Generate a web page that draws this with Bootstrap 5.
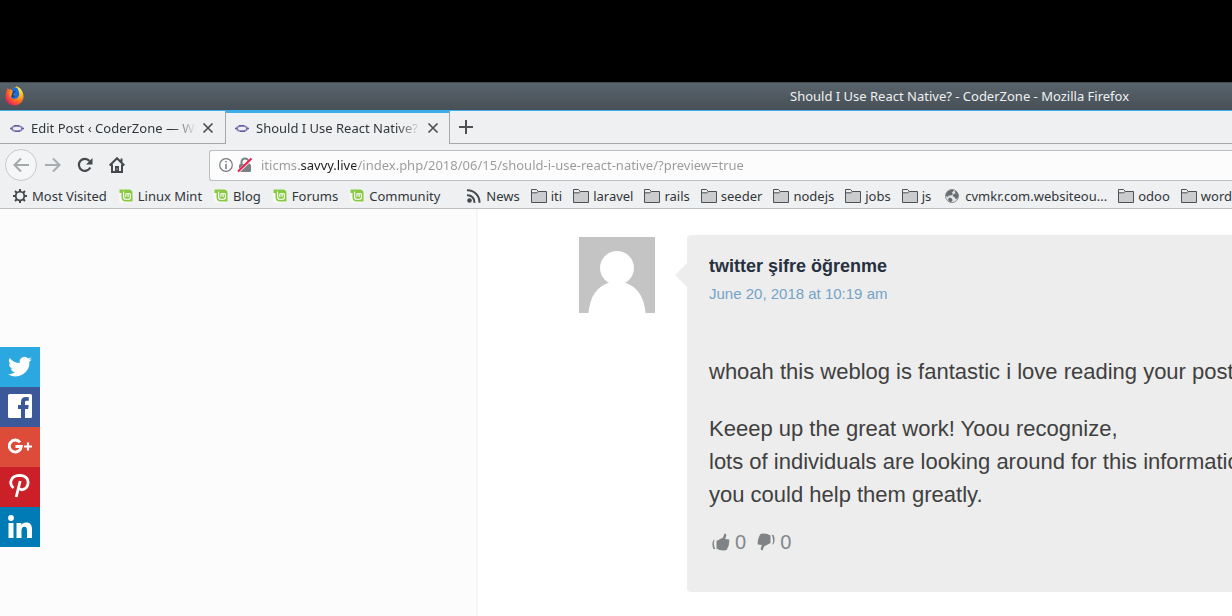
<!DOCTYPE html>
<html lang="en">
<head>
<meta charset="utf-8">
<meta name="viewport" content="width=device-width, initial-scale=1">
<title>Should I Use React Native? - CoderZone</title>
<link href="https://cdn.jsdelivr.net/npm/bootstrap@5.3.0/dist/css/bootstrap.min.css" rel="stylesheet">
<style>
body{font-family:"Noto Sans",sans-serif;font-size:13px;line-height:20px;color:#31363b;background:#fff;overflow:hidden}
a{color:inherit;text-decoration:none}
svg{display:block;flex:none}
.screen-gap{height:82px;background:#000}
.titlebar{height:28px;background:linear-gradient(#59636b,#475057);border-top:1px solid #434a50;color:#eff0f1;padding-left:5px;padding-bottom:2px}
.titlebar .caption{margin-left:766px;white-space:nowrap}
.chrome{background:#eff0f1}
.tabstrip{height:34px;border-top:1px solid #3daee9}
.tab-item{height:33px;border-bottom:1px solid #a4a8ab;border-right:1px solid #a4a8ab;padding-left:9px;padding-right:11px;padding-top:2px;gap:6px}
.tab-first{width:226px}
.tab-current{width:224px;border-top:2px solid #3daee9;border-bottom:0;padding:0 10px 1px 8px}
.tab-name{white-space:nowrap;overflow:hidden;-webkit-mask-image:linear-gradient(90deg,#000 calc(100% - 24px),transparent);mask-image:linear-gradient(90deg,#000 calc(100% - 24px),transparent)}
.tab-rest{border-bottom:1px solid #a4a8ab;padding-left:9px}
.plain{background:none;border:0;padding:0;color:#4d5155}
.toolbar{height:42px;padding:0 0 0 5px}
.back{width:32px;height:32px;border:1px solid #c6c8ca;border-radius:50%;background:#f5f6f7}
.urlbox{height:31px;border:1px solid #bcbfc1;border-right:0;border-radius:3px 0 0 3px;background:#fcfcfc;padding-left:9px;margin-left:84px}
.urlbox input{border:0;padding:0;outline:0;min-width:0;line-height:20px;color:transparent;background:linear-gradient(90deg,#999 38px,#1c1e20 38px,#1c1e20 95px,#999 95px);-webkit-background-clip:text;background-clip:text}
.bookmarks{height:23px;padding-left:12px;padding-bottom:2px;gap:11px;border-bottom:1px solid #bcbebf;overflow:hidden;white-space:nowrap}
.bookmarks a{gap:4px;flex:none}
.bookmarks .after-split{margin-left:15px}
.bookmarks .site{margin-left:2px;gap:5px}
.page-side{width:478px;min-height:407px;flex:none;background:#fcfcfc;border-right:2px solid #f5f5f5;padding-top:138px}
.share a{width:40px;height:40px;display:flex;align-items:center;justify-content:center}
.tw{background:#2ca8e0}.fb{background:#3b5998}.gp{background:#dd4b39}.pi{background:#cb2027}.li{background:#007bb6}
.thread{font-family:"Liberation Sans",sans-serif;padding:26px 0 24px 101px;min-width:0}
.avatar{margin-top:2px}
.bubble{position:relative;background:#ededed;border-radius:4px 0 0 4px;margin-left:32px;padding:20px 0 38px 22px;white-space:nowrap;min-width:0}
.bubble::before{content:"";position:absolute;left:-12px;top:28px;border:12px solid transparent;border-left:0;border-right-color:#ededed}
.bubble h2{font-size:18px;line-height:22px;font-weight:700;color:#26303f;margin:0}
.stamp{font-size:15px;line-height:20px;color:#74a3c7;display:block;margin-top:7px}
.words{font-size:22px;line-height:33px;color:#404040;padding-top:51px}
.words p{margin:0 0 24px}
.votes{font-size:20px;line-height:24px;color:#83878a;padding-left:3px;margin-top:-5px;gap:11px}
.votes button{font-size:20px;line-height:24px;color:#83878a;gap:5px}
</style>
<script src="https://cdn.jsdelivr.net/npm/bootstrap@5.3.0/dist/js/bootstrap.bundle.min.js"></script>
</head>
<body>
<svg width="0" height="0" class="position-absolute" aria-hidden="true">
<defs>
<symbol id="folder" viewBox="0 0 16 16"><path d="M.5 14.500v-13h5l2 2h8v11z" fill="#cbcccd" stroke="#4d5155"/><path d="M1 2h4.300l1.500 1.500-1.500 1H1z" fill="#eff0f1"/><path d="M1 4.800h4.500l2-1.300" fill="none" stroke="#4d5155"/></symbol>
<symbol id="mint" viewBox="0 0 16 16"><rect x="1" y="1" width="14" height="14" rx="2" fill="#f7f7f5"/><path d="M1.500 1.500H11q3.500 0 3.500 3.500v8.500H8q-4.500 0-4.500-4.500V5h-2z" fill="#87c940"/><path d="M5.600 3.500V9q0 2.300 2.400 2.300h2.400q2 0 2-2V6.500q0-1-1.100-1t-1.200 1V9M10.100 6.500q0-1-1.100-1t-1.200 1V9" fill="none" stroke="#fff" stroke-width="1.100"/></symbol>
<symbol id="coder" viewBox="0 0 16 16"><ellipse cx="8" cy="8.500" rx="5" ry="2.700" fill="none" stroke="#8c86bd" stroke-width="1.800"/><path d="M1 8.500h2.500M12.500 8.500H15M5 5.700h5M6 11.300h5" stroke="#625ca5" stroke-width="1.300"/></symbol>
<symbol id="cross" viewBox="0 0 12 12"><path d="M1.500 1.500l9 9M10.500 1.500l-9 9" stroke="#4d5155" stroke-width="1.700"/></symbol>
<radialGradient id="flame" cx=".8" cy=".15" r="1"><stop offset="0" stop-color="#fff04f"/><stop offset=".4" stop-color="#ffac20"/><stop offset=".7" stop-color="#ff5a28"/><stop offset="1" stop-color="#e21667"/></radialGradient>
</defs>
</svg>

<div class="screen-gap"></div>
<header class="chrome">
  <div class="titlebar d-flex align-items-center">
    <svg width="19" height="20" viewBox="0 0 19 20"><path d="M1.500 5l1.300-3 1.700 2L6 2.500l.5 2 5-4.300C16 2 18.500 6 18.500 10.500c0 5-4 9-9 9s-9-4-9-8.500c0-2.500.3-4 1-6z" fill="url(#flame)"/><path d="M7 4c2-3 4.500-3 5.500-1.500C14.500 6 15 9 13 11.500c-2 2-5.500 1.800-7-.5l3-.5 2-1.500-3-.5V7l2-1-2.500-.7z" fill="#176de0"/><path d="M4 6l3 .5-1 2 2 1.500-3 1z" fill="#ff9b22"/><path d="M8 5h3l-2 2-1 2 3 .5-2 1.700-3-.2" fill="#173f98"/></svg>
    <span class="caption">Should I Use React Native? - CoderZone - Mozilla Firefox</span>
  </div>
  <div class="tabstrip d-flex">
    <div class="tab-item tab-first d-flex align-items-center">
      <svg width="16" height="16"><use href="#coder"/></svg>
      <span class="tab-name flex-grow-1">Edit Post ‹ CoderZone — WordPress</span>
      <button class="plain" aria-label="Close tab"><svg width="12" height="12"><use href="#cross"/></svg></button>
    </div>
    <div class="tab-item tab-current d-flex align-items-center">
      <svg width="16" height="16"><use href="#coder"/></svg>
      <span class="tab-name flex-grow-1">Should I Use React Native? - CoderZone</span>
      <button class="plain" aria-label="Close tab"><svg width="12" height="12"><use href="#cross"/></svg></button>
    </div>
    <div class="tab-rest flex-grow-1 d-flex align-items-center">
      <button class="plain" aria-label="New tab"><svg width="14" height="14" viewBox="0 0 14 14"><path d="M7 0v14M0 7h14" stroke="#4d5155" stroke-width="2"/></svg></button>
    </div>
  </div>
  <div class="toolbar d-flex align-items-center">
    <button class="plain back d-flex align-items-center justify-content-center" aria-label="Back"><svg width="16" height="16" viewBox="0 0 16 16"><path d="M16 8H2M8 1.500L1.500 8 8 14.500" fill="none" stroke="#a5a8aa" stroke-width="2"/></svg></button>
    <button class="plain ms-2" aria-label="Forward"><svg width="16" height="16" viewBox="0 0 16 16"><path d="M0 8h14M8 1.500L14.500 8 8 14.500" fill="none" stroke="#a9acae" stroke-width="2"/></svg></button>
    <button class="plain ms-3" aria-label="Reload"><svg width="16" height="16" viewBox="0 0 16 16"><path d="M13.300 10.500A6 6 0 1 1 12.500 4" fill="none" stroke="#45494d" stroke-width="2.200"/><path d="M15.500 1v6.500H9z" fill="#45494d"/></svg></button>
    <button class="plain ms-3" aria-label="Home"><svg width="16" height="16" viewBox="0 0 16 16"><path d="M.7 8.500L8 1.200l7.300 7.300M3 7.500V15h10V7.500M12.500 5V1.500" fill="none" stroke="#45494d" stroke-width="2"/><path d="M6 15V9h4v6z" fill="#45494d"/><path d="M8 11.500v1" stroke="#eff0f1"/></svg></button>
    <div class="urlbox d-flex align-items-center flex-grow-1">
      <svg width="14" height="14" viewBox="0 0 14 14"><circle cx="7" cy="7" r="6.300" fill="none" stroke="#777b7e" stroke-width="1.200"/><path d="M7 6v5M7 3v1.600" stroke="#777b7e" stroke-width="1.500"/></svg>
      <svg class="ms-1" width="16" height="16" viewBox="0 0 16 16"><rect x="2" y="7" width="12" height="8" rx="1.500" fill="#7d8083"/><path d="M4.500 7.500V5a3.500 3.500 0 0 1 7 0v2.500" fill="none" stroke="#7d8083" stroke-width="2"/><path d="M1.500 14.500L14.500 2" stroke="#fcfcfc" stroke-width="3"/><path d="M1 14.500L14.500 1.500" stroke="#ed1c4e" stroke-width="2"/></svg>
      <input class="flex-grow-1 ms-2" type="text" aria-label="Address" value="iticms.savvy.live/index.php/2018/06/15/should-i-use-react-native/?preview=true">
    </div>
  </div>
  <nav class="bookmarks d-flex align-items-center" aria-label="Bookmarks">
    <a href="#" class="d-flex align-items-center"><svg width="16" height="16" viewBox="0 0 16 16"><circle cx="8" cy="8" r="4.300" fill="none" stroke="#45494d" stroke-width="1.800"/><path d="M8 1v3M8 12v3M1 8h3M12 8h3M3 3l2 2M11 11l2 2M13 3l-2 2M5 11l-2 2" stroke="#45494d" stroke-width="2"/></svg>Most Visited</a>
    <a href="#" class="d-flex align-items-center"><svg width="16" height="16"><use href="#mint"/></svg>Linux Mint</a>
    <a href="#" class="d-flex align-items-center"><svg width="16" height="16"><use href="#mint"/></svg>Blog</a>
    <a href="#" class="d-flex align-items-center"><svg width="16" height="16"><use href="#mint"/></svg>Forums</a>
    <a href="#" class="d-flex align-items-center"><svg width="16" height="16"><use href="#mint"/></svg>Community</a>
    <a href="#" class="d-flex align-items-center after-split"><svg width="16" height="16" viewBox="0 0 16 16"><circle cx="3.500" cy="12.500" r="2.300" fill="#45494d"/><path d="M1 7.200A7 7 0 0 1 8.500 14.800M1 2.300A12 12 0 0 1 13.500 14.800" fill="none" stroke="#45494d" stroke-width="2"/></svg>News</a>
    <a href="#" class="d-flex align-items-center"><svg width="16" height="16"><use href="#folder"/></svg>iti</a>
    <a href="#" class="d-flex align-items-center"><svg width="16" height="16"><use href="#folder"/></svg>laravel</a>
    <a href="#" class="d-flex align-items-center"><svg width="16" height="16"><use href="#folder"/></svg>rails</a>
    <a href="#" class="d-flex align-items-center"><svg width="16" height="16"><use href="#folder"/></svg>seeder</a>
    <a href="#" class="d-flex align-items-center"><svg width="16" height="16"><use href="#folder"/></svg>nodejs</a>
    <a href="#" class="d-flex align-items-center"><svg width="16" height="16"><use href="#folder"/></svg>jobs</a>
    <a href="#" class="d-flex align-items-center"><svg width="16" height="16"><use href="#folder"/></svg>js</a>
    <a href="#" class="d-flex align-items-center site"><svg width="16" height="16" viewBox="0 0 16 16"><circle cx="8" cy="8" r="6.500" fill="#e4e5e6" stroke="#8b8e90"/><path d="M2 6l2-3 4-1.500 2 1-2 2 1 1.500-2 1.500H4.500L4 9 2 8zM10.500 3l2 .5 2 3.500-1 3.500-2 .5-1-2-2-1 1-2 2-.5zM5 9.500l3 1 .5 2-2 2L4 12z" fill="#696d70"/></svg>cvmkr.com.websiteou...</a>
    <a href="#" class="d-flex align-items-center"><svg width="16" height="16"><use href="#folder"/></svg>odoo</a>
    <a href="#" class="d-flex align-items-center"><svg width="16" height="16"><use href="#folder"/></svg>wordpress</a>
  </nav>
</header>

<main class="d-flex">
  <aside class="page-side">
    <nav class="share" aria-label="Share">
      <a class="tw" href="#" aria-label="Twitter"><svg width="26" height="26" viewBox="0 0 24 24"><path fill="#fff" d="M23 4.900a9 9 0 0 1-2.600.7 4.500 4.500 0 0 0 2-2.500 9 9 0 0 1-2.900 1.100 4.500 4.500 0 0 0-7.700 4.100A12.800 12.800 0 0 1 2.500 3.600a4.500 4.500 0 0 0 1.400 6 4.500 4.500 0 0 1-2-.6 4.500 4.500 0 0 0 3.600 4.500 4.500 4.500 0 0 1-2 .1 4.500 4.500 0 0 0 4.200 3.100A9 9 0 0 1 1 18.600a12.800 12.800 0 0 0 19.700-11.400A9 9 0 0 0 23 4.900z"/></svg></a>
      <a class="fb" href="#" aria-label="Facebook"><svg width="24" height="26" viewBox="0 0 24 26"><path fill="#fff" d="M1.500 0h21A1.500 1.500 0 0 1 24 1.500v21a1.500 1.500 0 0 1-1.500 1.500H17v-9h3.200l.5-4H17V8.500c0-1.200.4-1.800 1.800-1.800h2V3.200q-1-.2-3-.2C14.700 3 13 4.800 13 8v3h-3v4h3v9H1.500A1.500 1.500 0 0 1 0 22.500v-21A1.500 1.500 0 0 1 1.500 0z"/></svg></a>
      <a class="gp" href="#" aria-label="Google Plus"><svg width="24" height="24" viewBox="0 0 24 24"><path d="M12 7.300A6 6 0 1 0 13.300 11.500H7.500" fill="none" stroke="#fff" stroke-width="2.900"/><path d="M16 11.500h8M20 7.500v8" stroke="#fff" stroke-width="2.200"/></svg></a>
      <a class="pi" href="#" aria-label="Pinterest"><svg width="24" height="28" viewBox="0 0 24 28"><path d="M5.500 15C.5 11 2.500 2.500 11.500 2.300c6.500 0 9.500 4.200 8.300 9.200-1.200 5-7.300 7-9.300 3.200M12.200 8l-4 16" fill="none" stroke="#fff" stroke-width="2.800"/></svg></a>
      <a class="li" href="#" aria-label="LinkedIn"><svg width="24" height="24" viewBox="0 0 24 24"><circle cx="3" cy="3" r="2.900" fill="#fff"/><path fill="#fff" d="M.5 8h5v15h-5zM8.500 8h4.800v2.100c.8-1.500 2.500-2.500 4.700-2.500 4.700 0 6 2.700 6 7.200V23h-5v-7.300c0-2.200-.3-4-2.600-4-2.300 0-2.900 1.800-2.900 4V23h-5z"/></svg></a>
    </nav>
  </aside>
  <section class="thread d-flex align-items-start flex-grow-1">
    <svg class="avatar" width="76" height="76" viewBox="0 0 76 76" role="img" aria-label="Avatar"><path fill="#c4c4c4" d="M0 0h76v76H0z"/><circle cx="38" cy="31" r="17" fill="#fff"/><path fill="#fff" d="M9.500 76C11 59 18 50 29 46h18c11 4 18 13 19.500 30z"/></svg>
    <article class="bubble flex-grow-1">
      <h2>twitter şifre öğrenme</h2>
      <a class="stamp" href="#">June 20, 2018 at 10:19 am</a>
      <div class="words">
        <p>whoah this weblog is fantastic i love reading your posts.</p>
        <p>Keeep up the great work! Yoou recognize,<br>lots of individuals are looking around for this information,<br>you could help them greatly.</p>
      </div>
      <div class="votes d-flex">
        <button class="plain d-flex align-items-center" aria-label="Like, 0"><svg width="18" height="18" viewBox="0 0 18 18"><path fill="#7f8385" d="M4.500 8L11 4.500 12.500.5q2 0 1.800 2L13.200 6l3.800.5q.8.700 0 2 .7 1-.2 2 .5 1.200-.4 2 .3 1.200-.7 2-.3 2.500-2 2.800Q8 18 4.500 15.500zM3 6.500Q1.500 7.500 2 11.500 2.200 15 3.300 16 1.300 17 .7 14-.3 7 3 6.500z"/></svg><span>0</span></button>
        <button class="plain d-flex align-items-center" aria-label="Dislike, 0"><svg width="18" height="18" viewBox="0 0 18 18"><path fill="#7f8385" transform="rotate(180 9 9)" d="M4.500 8L11 4.500 12.500.5q2 0 1.800 2L13.200 6l3.800.5q.8.700 0 2 .7 1-.2 2 .5 1.200-.4 2 .3 1.200-.7 2-.3 2.500-2 2.800Q8 18 4.500 15.500zM3 6.500Q1.500 7.500 2 11.500 2.200 15 3.300 16 1.300 17 .7 14-.3 7 3 6.500z"/></svg><span>0</span></button>
      </div>
    </article>
  </section>
</main>
</body>
</html>
